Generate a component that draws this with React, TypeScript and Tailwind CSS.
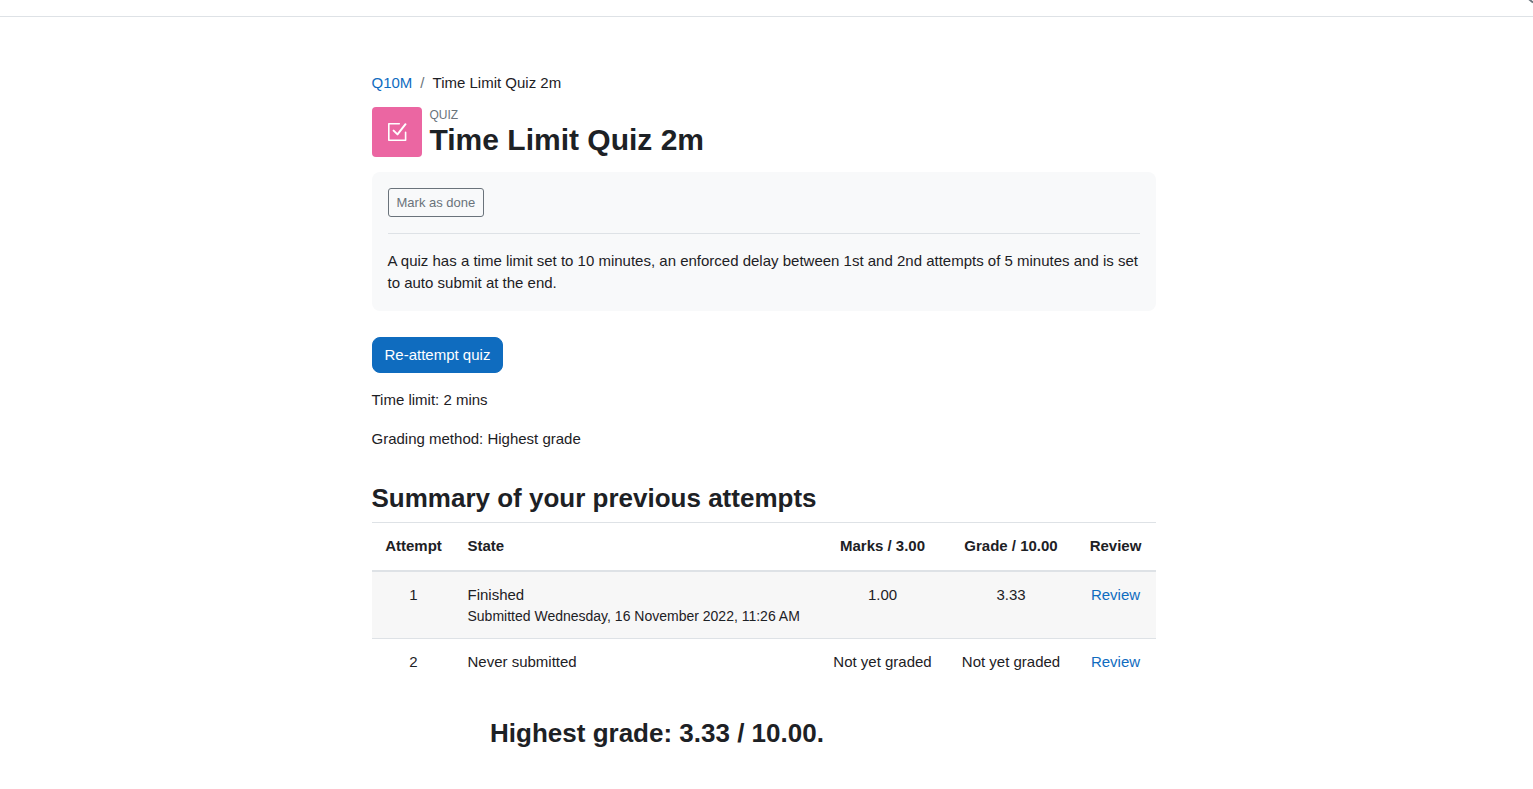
import type { ReactNode } from "react";

interface Attempt {
    number: number;
    state: string;
    submitted?: string;
    marks: string;
    grade: string;
}

const attempts: Attempt[] = [
    {
        number: 1,
        state: "Finished",
        submitted: "Submitted Wednesday, 16 November 2022, 11:26 AM",
        marks: "1.00",
        grade: "3.33",
    },
    {
        number: 2,
        state: "Never submitted",
        marks: "Not yet graded",
        grade: "Not yet graded",
    },
];

function TextLink({ children }: { children: ReactNode }) {
    return (
        <a href="#" className="text-[#0f6cbf] hover:underline">
            {children}
        </a>
    );
}

function QuizIcon() {
    return (
        <div className="flex size-[50px] shrink-0 items-center justify-center rounded-sm bg-[#eb66a2]">
            <svg width="24" height="24" viewBox="0 0 24 24" fill="none" stroke="#fff" strokeWidth="1.6" aria-hidden="true">
                <path d="M14.3 3.8H3.8v16.4h16.8v-8" strokeLinecap="round" strokeLinejoin="round" />
                <path d="M8.6 10.6l3.9 3.8L20.5 4.2" strokeWidth="2" strokeLinecap="round" strokeLinejoin="round" />
            </svg>
        </div>
    );
}

export default function App() {
    return (
        <div className="min-h-screen bg-white font-['Liberation_Sans',Arial,sans-serif] text-[15px] leading-normal text-[#1d2125]">
            {/* Navbar bottom edge */}
            <header className="flex h-[17px] justify-end border-b border-[#dee2e6]">
                <svg width="5" height="4" viewBox="0 0 5 4" aria-hidden="true">
                    <path d="M0 -1.5L5 2.5" stroke="#6a737b" strokeWidth="1.8" />
                </svg>
            </header>

            <div className="pr-[6px]">
                <main className="mx-auto max-w-[784px] pt-[55px]">
                    <nav aria-label="Breadcrumb">
                        <ol className="flex gap-2">
                            <li><TextLink>Q10M</TextLink></li>
                            <li aria-hidden="true" className="text-[#6a737b]">/</li>
                            <li>Time Limit Quiz 2m</li>
                        </ol>
                    </nav>

                    <div className="mt-3 flex items-center gap-2">
                        <QuizIcon />
                        <div>
                            <div className="text-xs leading-4 text-[#6a737b] uppercase">Quiz</div>
                            <h1 className="text-3xl leading-[34px] font-bold">Time Limit Quiz 2m</h1>
                        </div>
                    </div>

                    {/* Activity information */}
                    <section className="mt-[15px] rounded-lg bg-[#f8f9fa] p-4">
                        <button
                            type="button"
                            className="block rounded-[3px] border border-[#6a737b] px-2 py-1 text-[13px] leading-[19px] text-[#6a737b]"
                        >
                            Mark as done
                        </button>
                        <hr className="my-4 border-[#dee2e6]" />
                        <p>
                            A quiz has a time limit set to 10 minutes, an enforced delay between 1st and 2nd attempts of 5
                            minutes and is set to auto submit at the end.
                        </p>
                    </section>

                    <button
                        type="button"
                        className="mt-[26px] block rounded-lg border border-[#0f6cbf] bg-[#0f6cbf] px-3 py-1.5 text-white"
                    >
                        Re-attempt quiz
                    </button>

                    <p className="mt-4">Time limit: 2 mins</p>
                    <p className="mt-4">Grading method: Highest grade</p>

                    <h2 className="mt-[33px] text-[26px] leading-[31px] font-bold">Summary of your previous attempts</h2>
                    <table className="mt-2 w-full border-collapse">
                        <thead>
                            <tr className="border-t border-b-2 border-[#dee2e6]">
                                <th scope="col" className="w-[84px] p-3">Attempt</th>
                                <th scope="col" className="p-3 text-left">State</th>
                                <th scope="col" className="w-32 p-3">Marks / 3.00</th>
                                <th scope="col" className="w-[129px] p-3">Grade / 10.00</th>
                                <th scope="col" className="w-20 p-3">Review</th>
                            </tr>
                        </thead>
                        <tbody>
                            {attempts.map((attempt) => (
                                <tr key={attempt.number} className="border-t border-[#dee2e6] text-center align-top odd:bg-[#f7f7f7]">
                                    <td className="p-3">{attempt.number}</td>
                                    <td className="p-3 text-left">
                                        {attempt.state}
                                        {attempt.submitted && (
                                            <div className="text-sm leading-5">{attempt.submitted}</div>
                                        )}
                                    </td>
                                    <td className="p-3">{attempt.marks}</td>
                                    <td className="p-3">{attempt.grade}</td>
                                    <td className="p-3"><TextLink>Review</TextLink></td>
                                </tr>
                            ))}
                        </tbody>
                    </table>

                    <div className="max-w-[571px] pt-8 text-center">
                        <h2 className="text-[26px] leading-[31px] font-bold">Highest grade: 3.33 / 10.00.</h2>
                    </div>
                </main>
            </div>
        </div>
    );
}
